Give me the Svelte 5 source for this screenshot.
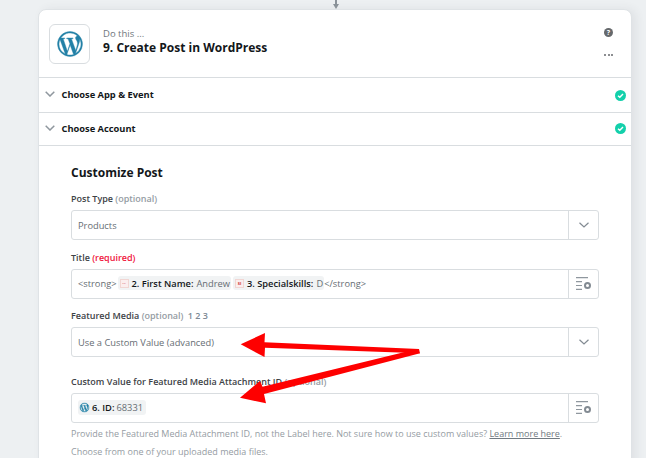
<script>
	const wpPath = "M12 2a10 10 0 1 0 0 20 10 10 0 0 0 0-20zM3.2 12c0-1.3.3-2.5.8-3.6l4.2 11.5A8.8 8.8 0 0 1 3.2 12zm8.8 8.8c-.9 0-1.700-.1-2.500-.4l2.600-7.600 2.700 7.400.1.100c-.9.300-1.900.500-2.900.500zm1.200-12.900c.5 0 1-.1 1-.1.500-.1.400-.7 0-.7 0 0-1.400.100-2.300.100-.9 0-2.300-.1-2.300-.1-.5 0-.5.700-.1.700 0 0 .5.100 1 .1l1.400 3.900-2 6-3.300-9.900c.5 0 1-.1 1-.1.500-.1.400-.7 0-.7 0 0-1.400.100-2.300.100h-.6A8.800 8.800 0 0 1 18 5.500h-.1c-.9 0-1.500.800-1.500 1.600 0 .7.400 1.300.9 2.100.300.600.700 1.300.700 2.400 0 .7-.3 1.600-.6 2.800l-.8 2.800zm3.200 11.700 2.700-7.800c.5-1.300.7-2.300.7-3.200 0-.3 0-.6-.1-.9a8.800 8.800 0 0 1-3.300 11.900z";
</script>

<div class="page">
	<div class="connector"><span class="stem"></span><span class="tip"></span></div>
	<div class="card">
		<header class="head">
			<div class="app-icon">
				<svg width="30" height="30" viewBox="0 0 24 24"><path fill="#2280a6" stroke="#2280a6" stroke-width="0.3" fill-rule="evenodd" d={wpPath} /></svg>
			</div>
			<div class="titles">
				<div class="eyebrow">Do this ...</div>
				<div class="step">9. Create Post in WordPress</div>
			</div>
			<div class="tools">
				<span class="help">?</span>
				<span class="dots"><i></i><i></i><i></i></span>
			</div>
		</header>

		{#each ["Choose App & Event", "Choose Account"] as label, i}
			<div class="section" class:tall={i === 0}>
				<svg class="caret" width="10" height="6" viewBox="0 0 10 6"><path d="M.7.7L5 5l4.300-4.300" fill="none" stroke="#8f979e" stroke-width="1.500" /></svg>
				<span>{label}</span>
				<svg class="ok" width="11" height="11" viewBox="0 0 11 11"><circle cx="5.500" cy="5.500" r="5.500" fill="#13d0ab" /><path d="M3 5.700l1.800 1.600L8 4" fill="none" stroke="#fff" stroke-width="1.400" /></svg>
			</div>
		{/each}

		<div class="body">
			<h3>Customize Post</h3>

			<div class="field first">
				<div class="lbl">Post Type <em>(optional)</em></div>
				<div class="box">
					<div class="val">Products</div>
					<div class="side"><svg width="10" height="6" viewBox="0 0 10 6"><path d="M.5.7L5 5l4.500-4.300" fill="none" stroke="#838b93" stroke-width="1.200" /></svg></div>
				</div>
			</div>

			<div class="field second">
				<div class="lbl">Title <em class="req">(required)</em></div>
				<div class="box">
					<div class="val tok">
						&lt;strong&gt;
						<span class="pill"><span class="mini">···</span><b>2. First Name:</b> Andrew</span>
						<span class="pill"><span class="mini">SI</span><b>3. Specialskills:</b> D</span>
						&lt;/strong&gt;
					</div>
					<div class="side">
						<svg width="16" height="14" viewBox="0 0 16 14"><path d="M0 .7h12M0 4.700h6M0 8.500h6M0 12.300h6" stroke="#8f979e" stroke-width="1.200" /><circle cx="11.500" cy="8.500" r="2.500" fill="none" stroke="#838b93" stroke-width="2" /></svg>
					</div>
				</div>
			</div>

			<div class="field third">
				<div class="lbl">Featured Media <em>(optional)</em> <span class="nums">1 2 3</span></div>
				<div class="box">
					<div class="val">Use a Custom Value (advanced)</div>
					<div class="side"><svg width="10" height="6" viewBox="0 0 10 6"><path d="M.5.7L5 5l4.500-4.300" fill="none" stroke="#838b93" stroke-width="1.200" /></svg></div>
				</div>
			</div>

			<div class="field fourth">
				<div class="lbl">Custom Value for Featured Media Attachment ID <em>(optional)</em></div>
				<div class="box">
					<div class="val tok">
						<span class="pill wp"><svg width="11" height="11" viewBox="0 0 24 24"><path fill="#2280a6" stroke="#2280a6" stroke-width="0.6" fill-rule="evenodd" d={wpPath} /></svg><b>6. ID:</b> 68331</span>
					</div>
					<div class="side">
						<svg width="16" height="14" viewBox="0 0 16 14"><path d="M0 .7h12M0 4.700h6M0 8.500h6M0 12.300h6" stroke="#8f979e" stroke-width="1.200" /><circle cx="11.500" cy="8.500" r="2.500" fill="none" stroke="#838b93" stroke-width="2" /></svg>
					</div>
				</div>
				<p class="hint">Provide the Featured Media Attachment ID, not the Label here. Not sure how to use custom values? <u>Learn more here</u>.</p>
				<p class="hint">Choose from one of your uploaded media files.</p>
			</div>
		</div>
	</div>

	<!-- annotation arrows drawn on top of the form -->
	<svg class="arrows" width="646" height="458" viewBox="0 0 646 458">
		<path d="M240.700 344.300L265 333L264.500 342.300L419 349L420 353.300L265 347.700L264.500 357z" fill="#fe0000" />
		<path d="M240 397.700L260 381L262.500 386.700L415 349.500L420 353.300L264 394L266 403.300z" fill="#fe0000" />
	</svg>
</div>

<style>
	:global(body) {
		background: #edf0f2;
		font-family: "Open Sans", sans-serif;
	}
	.page {
		position: relative;
		width: 646px;
		height: 458px;
		overflow: hidden;
		padding-left: 38px;
		box-sizing: border-box;
	}
	.connector {
		height: 9px;
		width: 594px;
		display: flex;
		flex-direction: column;
		align-items: center;
		padding-left: 2px;
		box-sizing: border-box;
	}
	.stem {
		width: 2px;
		height: 5px;
		background: #8a9299;
	}
	.tip {
		width: 0;
		height: 0;
		border-left: 3.500px solid transparent;
		border-right: 3.500px solid transparent;
		border-top: 5px solid #8a9299;
	}
	.card {
		width: 594px;
		background: #fff;
		border: 1px solid #dfe3e6;
		border-radius: 8px 8px 0 0;
		box-sizing: border-box;
		box-shadow: 4px 0 10px rgba(60, 70, 80, 0.08);
		height: 480px;
	}
	.head {
		height: 68px;
		display: flex;
		align-items: flex-start;
		padding: 14px 18px 0 10px;
		box-sizing: border-box;
		border-bottom: 1px solid #d9dde0;
	}
	.app-icon {
		width: 41px;
		height: 40px;
		border: 1px solid #d9dde0;
		border-radius: 6px;
		display: flex;
		align-items: center;
		justify-content: center;
		box-sizing: border-box;
		margin-right: 13px;
	}
	.titles {
		flex: 1;
		padding-top: 3px;
	}
	.eyebrow {
		font-size: 9.500px;
		line-height: 13px;
		color: #6f767c;
	}
	.step {
		font-size: 12px;
		line-height: 16px;
		font-weight: 700;
		color: #13171a;
	}
	.tools {
		display: flex;
		flex-direction: column;
		align-items: center;
		gap: 16.500px;
		padding-top: 4px;
	}
	.help {
		width: 9px;
		height: 9px;
		border-radius: 50%;
		background: #66696c;
		color: #fff;
		font-size: 7px;
		line-height: 9px;
		font-weight: 700;
		text-align: center;
	}
	.dots {
		display: flex;
		gap: 1.500px;
	}
	.dots i {
		width: 2px;
		height: 2px;
		border-radius: 50%;
		background: #66696c;
	}
	.section {
		height: 33px;
		display: flex;
		align-items: center;
		padding: 0 5px 2px 6px;
		box-sizing: border-box;
		border-bottom: 1px solid #d9dde0;
		font-size: 9.300px;
		font-weight: 700;
		color: #13171a;
	}
	.section.tall {
		height: 35px;
	}
	.section.tall .ok {
		margin-top: 2px;
	}
	.caret {
		margin-right: 6.500px;
	}
	.section span {
		flex: 1;
	}
	.body {
		padding: 19px 32px 0 32px;
	}
	h3 {
		margin: 0;
		font-size: 12px;
		line-height: 16px;
		font-weight: 700;
		color: #13171a;
	}
	.field.first { margin-top: 12px; }
	.field.second { margin-top: 12px; }
	.field.third { margin-top: 11px; }
	.field.fourth { margin-top: 19px; }
	.lbl {
		font-size: 9px;
		line-height: 12px;
		font-weight: 600;
		color: #3d4246;
		margin-bottom: 5px;
		white-space: nowrap;
	}
	.lbl em {
		font-style: normal;
		color: #959ca3;
	}
	.lbl em.req {
		color: #f0153c;
	}
	.nums {
		color: #7d8a95;
		margin-left: 2px;
	}
	.box {
		display: flex;
		height: 30px;
		border: 1px solid #d9dde0;
		border-radius: 3px;
		box-sizing: border-box;
		background: #fff;
	}
	.val {
		flex: 1;
		display: flex;
		align-items: center;
		gap: 1px;
		padding-left: 6px;
		font-size: 9.300px;
		color: #666d73;
		white-space: nowrap;
	}
	.val.tok {
		padding-bottom: 2px;
	}
	.side {
		width: 29px;
		border-left: 1px solid #d9dde0;
		display: flex;
		align-items: center;
		justify-content: center;
	}
	.pill {
		display: inline-flex;
		align-items: center;
		gap: 3px;
		height: 14px;
		padding: 0 1px 0 2px;
		margin-right: 1px;
		background: #f1f3f4;
		border-radius: 3px;
	}
	.pill + .pill {
		margin: 0 -1px 0 0;
	}
	.pill b {
		font-weight: 600;
		color: #13171a;
	}
	.mini {
		width: 9px;
		height: 9px;
		border: 1px solid #f1d6d3;
		box-sizing: border-box;
		background: #fbeeee;
		color: #c33;
		font-size: 4px;
		line-height: 7px;
		text-align: center;
		font-weight: 700;
	}
	.pill.wp {
		margin: 0;
		padding: 0 3px 0 1px;
		gap: 2px;
		height: 15px;
	}
	.hint {
		margin: 4px 0 0;
		font-size: 9px;
		line-height: 13px;
		color: #959ca3;
		white-space: nowrap;
	}
	.hint + .hint {
		margin-top: 5px;
	}
	.hint u {
		color: #717a82;
	}
	.arrows {
		position: absolute;
		left: 0;
		top: 0;
	}
</style>
